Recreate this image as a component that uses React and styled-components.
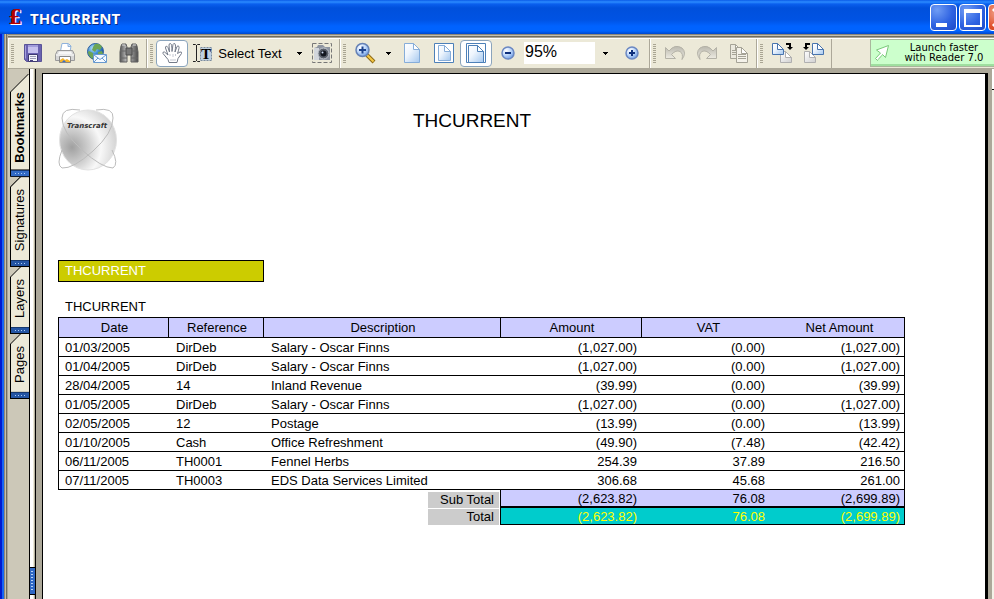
import React from 'react';
import styled, { createGlobalStyle, css } from 'styled-components';

const c = {
  face: '#ece9d8',
  shade: '#aca899',
  pane: '#ccc8b8',
  lilac: '#ccccff',
};

const GlobalStyle = createGlobalStyle`
  * { box-sizing: border-box; }
  html, body { margin: 0; height: 100%; overflow: hidden; }
  body, button, input { font-family: 'Liberation Sans', Arial, sans-serif; font-size: 13px; color: #000; }
  button { border: 0; padding: 0; background: none; cursor: pointer; }
  svg { display: block; flex: none; }
`;

const Window = styled.div`
  display: flex;
  flex-direction: column;
  height: 100vh;
  overflow: hidden;
  background: ${c.face};
`;

const TitleBar = styled.header`
  display: flex;
  align-items: center;
  flex: none;
  height: 34px;
  padding: 0 0 0 8px;
  overflow: hidden;
  background: linear-gradient(#0a5be8 0, #2b8bff 2px, #0a5fee 4px, #0050dc 8px, #0053e4 20px, #0062ff 26px, #0064ff 31px, #0047cc 34px);
`;

const AppMark = styled.span`
  width: 16px;
  color: #b30000;
  font: bold 20px/28px 'DejaVu Serif', serif;
  text-shadow: 1px 1px 0 #fff;
`;

const WindowTitle = styled.h1`
  margin: 0 0 0 6px;
  padding-top: 2px;
  color: #fff;
  font: bold 15px/18px 'Open Sans', 'Noto Sans', sans-serif;
  text-shadow: 1px 1px 0 #0a2a86;
`;

const Controls = styled.div`
  display: flex;
  gap: 2px;
  margin: 1px -21px 0 auto;
`;

const ControlButton = styled.button`
  width: 27px;
  height: 27px;
  flex: none;
  border: 1px solid #fff;
  border-radius: 4px;
  background: ${(p) =>
    p.$close
      ? 'radial-gradient(circle at 30% 30%, #f0a088, #e0502c 60%, #c03a18)'
      : 'radial-gradient(circle at 25% 20%, #6f9cf4, #2f63e2 55%, #1c49c8)'};
`;

const Frame = styled.div`
  display: flex;
  flex: 1;
  min-height: 0;
  border-left: 2px solid #0019cf;
  background: linear-gradient(90deg, #1664f4 0 2px, #8e8878 2px 3px, #c4bfae 3px 4px, #716d60 4px 5px, #aaa494 5px 6px, ${c.face} 6px);
  padding-left: 6px;
`;

const Client = styled.div`
  display: flex;
  flex-direction: column;
  flex: 1;
  min-width: 0;
  padding-top: 4px;
  background: linear-gradient(#8e8878 0 1px, #c4bfae 1px 2px, #716d60 2px 3px, #aaa494 3px 4px, ${c.face} 4px);
`;

const Toolbars = styled.div`
  display: flex;
  flex: none;
  height: 31px;
  overflow: hidden;
  border-top: 1px solid #fff;
  border-bottom: 1px solid ${c.shade};
`;

const Group = styled.div`
  display: flex;
  align-items: center;
  flex: none;
  padding: 0 1px 1px 2px;
  border-left: 1px solid #fff;
  border-right: 1px solid ${c.shade};
`;

const Grip = styled.span`
  width: 3px;
  height: 19px;
  margin-right: 3px;
  background: repeating-linear-gradient(#a9a593 0 1px, transparent 1px 2px);
`;

const Tool = styled.button`
  display: flex;
  align-items: center;
  justify-content: center;
  gap: 5px;
  width: ${(p) => p.$w || 32}px;
  height: 27px;
  ${(p) =>
    p.$active &&
    css`
      border: 1px solid #8aa4bc;
      border-radius: 4px;
      background: #fff;
    `}
`;

const ZoomInput = styled.input`
  width: 71px;
  height: 22px;
  padding: 0 0 2px 1px;
  border: 0;
  background: #fff;
  font-size: 16px;
  line-height: 20px;
`;

const Launch = styled.button`
  display: flex;
  align-items: center;
  flex: 1;
  height: 28px;
  margin-left: 38px;
  padding-left: 3px;
  border: solid #a9b79c;
  border-width: 1px 0 1px 1px;
  box-shadow: inset 0 -2px 0 #9fdf9f;
  background: #ccffcc;
`;

const LaunchText = styled.span`
  flex: 1;
  padding-left: 4px;
  white-space: nowrap;
  text-align: center;
  font: 10px/10px 'DejaVu Sans', Verdana, sans-serif;
`;

const Workspace = styled.div`
  display: flex;
  flex: 1;
  min-height: 0;
`;

const TabRail = styled.nav`
  width: 22px;
  padding: 5px 0 0 2px;
  background: ${c.pane};
  border-right: 1px solid #000;
`;

const TabButton = styled.button`
  --cut: ${(p) => (p.$first ? 18 : 10)}px;
  display: flex;
  flex-direction: column;
  width: 19px;
  padding-left: 1px;
  background: #000;
  clip-path: polygon(0 var(--cut), var(--cut) 0, 100% 0, 100% 100%, 0 100%);
`;

const TabFace = styled.span`
  display: block;
  width: 100%;
  padding: ${(p) => (p.$first ? '7px 0 18px' : '9px 0 12px')};
  line-height: 18px;
  text-align: left;
  writing-mode: vertical-rl;
  transform: rotate(180deg);
  background: ${c.face};
  font-weight: ${(p) => (p.$first ? 'bold' : 'normal')};
  clip-path: polygon(0 0, 100% 0, 100% calc(100% - var(--cut)), calc(100% - var(--cut)) 100%, 0 100%);
`;

const TabFoot = styled.span`
  display: block;
  width: 100%;
  height: 7px;
  border-bottom: 1px solid #000;
  background:
    repeating-linear-gradient(90deg, transparent 0 2px, #a9cbf5 2px 3px) 2px 2px / 13px 1px no-repeat,
    ${(p) => (p.$first ? '#316ac5' : '#2455a4')};
  border-top: 1px solid #16386f;
`;

const Splitter = styled.div`
  display: flex;
  flex-direction: column;
  justify-content: flex-end;
  width: 6px;
  padding-bottom: 4px;
  background: linear-gradient(90deg, #fff 0 3px, ${c.face} 3px 4px, #b5b19f 4px 5px, #000 5px);
`;

const SplitHandle = styled.button`
  width: 5px;
  height: 28px;
  border: solid #000;
  border-width: 1px 0;
  background:
    repeating-linear-gradient(transparent 0 2px, #b7d3f7 2px 3px) 1px 1px / 2px 22px no-repeat,
    #2f68c4;
`;

const Desk = styled.main`
  display: flex;
  flex: 1;
  min-width: 0;
  padding: 4px 4px 0 6px;
  background: ${c.shade};
`;

const Sheet = styled.article`
  flex: 1;
  min-width: 0;
  padding: 34px 80px 0 15px;
  border: solid #000;
  border-width: 1px 3px 0 1px;
  background: #fff;
`;

const ReportHead = styled.div`
  display: flex;
  align-items: flex-start;
`;

const ReportTitle = styled.h2`
  flex: 1;
  margin: 2px 79px 0 0;
  text-align: center;
  font-size: 19px;
  line-height: 22px;
  font-weight: normal;
`;

const AccountBand = styled.h3`
  width: 206px;
  margin: 89px 0 0;
  padding: 0 6px;
  border: 1px solid #000;
  background: #cccc00;
  color: #fff;
  font-size: 13px;
  line-height: 20px;
  font-weight: normal;
`;

const Ledger = styled.table`
  width: 100%;
  margin-top: 13px;
  table-layout: fixed;
  border-collapse: separate;
  border-spacing: 0;
  line-height: 18px;
`;

const Caption = styled.caption`
  padding: 3px 7px 1px;
  text-align: left;
`;

const Col = styled.col`
  width: ${(p) => (p.$w ? `${p.$w}px` : 'auto')};
`;

const HeadCell = styled.th`
  height: 21px;
  padding: 0 0 0 2px;
  border: solid #000;
  border-width: 1px 0 1px ${(p) => (p.$open ? 0 : 1)}px;
  background: ${c.lilac};
  font-weight: normal;
  line-height: 19px;
  &:last-child { border-right-width: 1px; }
`;

const Cell = styled.td`
  height: 19px;
  padding: 2px ${(p) => p.$pad || 4}px 0 8px;
  border-bottom: 1px solid #000;
  text-align: ${(p) => (p.$num ? 'right' : 'left')};
  line-height: 16px;
  white-space: nowrap;
  &:first-child { border-left: 1px solid #000; padding-left: 6px; }
  &:last-child { border-right: 1px solid #000; }
`;

const SumLabel = styled.th`
  padding: 1px 1px 0 0;
  font-weight: normal;
`;

const LabelBox = styled.span`
  display: block;
  width: 71px;
  margin-left: auto;
  padding-right: 5px;
  background: #ccc;
  text-align: right;
  line-height: 16px;
`;

const SumCell = styled.td`
  height: ${(p) => (p.$grand ? 17 : 18)}px;
  padding: 1px ${(p) => p.$pad || 4}px 0 0;
  border-bottom: ${(p) => (p.$grand ? 1 : 2)}px solid #000;
  background: ${(p) => (p.$grand ? '#00cccc' : c.lilac)};
  color: ${(p) => (p.$grand ? '#ffff00' : '#000')};
  text-align: right;
  line-height: 15px;
  &:nth-child(2) { border-left: 1px solid #000; }
  &:last-child { border-right: 1px solid #000; }
`;

const ScrollEdge = styled.div`
  width: 2px;
  background: linear-gradient(#fff 0 20px, #000 20px 21px, #f4f2e8 21px);
`;

const HiddenDefs = styled.svg`
  position: absolute;
`;

const Svg = ({ w = 22, h = 22, children }) => (
  <svg width={w} height={h} viewBox={`0 0 ${w} ${h}`} aria-hidden="true">{children}</svg>
);

const Defs = () => (
  <HiddenDefs width="0" height="0" aria-hidden="true">
    <defs>
      <linearGradient id="paper" x1="0" y1="0" x2="1" y2="1">
        <stop offset="0" stopColor="#fff" /><stop offset=".4" stopColor="#eef5fd" /><stop offset="1" stopColor="#a5c8ef" />
      </linearGradient>
      <linearGradient id="greyPaper" x1="0" y1="0" x2="1" y2="1">
        <stop offset="0" stopColor="#fff" /><stop offset="1" stopColor="#d0d0d0" />
      </linearGradient>
      <radialGradient id="lens" cx=".35" cy=".3" r=".8">
        <stop offset="0" stopColor="#fff" /><stop offset=".5" stopColor="#bcd6fa" /><stop offset="1" stopColor="#5f92e0" />
      </radialGradient>
      <radialGradient id="globe" cx=".35" cy=".3" r=".75">
        <stop offset="0" stopColor="#b9e4fb" /><stop offset=".5" stopColor="#3f8ed4" /><stop offset="1" stopColor="#164a96" />
      </radialGradient>
      <linearGradient id="tube"><stop offset="0" stopColor="#555" /><stop offset=".4" stopColor="#c8c8c8" /><stop offset="1" stopColor="#4c4c4c" /></linearGradient>
      <linearGradient id="arrowGrey" x1="0" y1="0" x2="0" y2="1"><stop offset="0" stopColor="#b9b7ad" /><stop offset="1" stopColor="#f1efe6" /></linearGradient>
      <radialGradient id="orb" cx=".22" cy=".62" r=".82">
        <stop offset="0" stopColor="#a0a0a0" /><stop offset=".38" stopColor="#d2d2d2" /><stop offset=".62" stopColor="#f8f8f8" /><stop offset="1" stopColor="#cfcfcf" />
      </radialGradient>
    </defs>
  </HiddenDefs>
);

const SaveIcon = () => (
  <Svg>
    <path d="M2.500 2.500h17v17h-15l-2-2z" fill="#6a62b0" stroke="#5a5498" />
    <path d="M3.500 3.500v13" stroke="#a6a0de" />
    <path d="M6 3h10v8H6z" fill="#c6c1ee" /><path d="M6 3h10v2H6z" fill="#a29ddb" />
    <path d="M6.500 12.500h9v7h-9z" fill="#f4f4fb" stroke="#3d3970" />
    <path d="M8 14.500h6M8 16.500h6" stroke="#9a9ab4" /><path d="M8 18h3v2H8z" fill="#45407e" />
  </Svg>
);
const PrintIcon = () => (
  <Svg>
    <path d="M6.500 9L8 1.500h6.500l2.500 2.500-1 6z" fill="#fff" stroke="#8fb2dc" /><path d="M14 2v2.500h3" fill="#cfe2f7" stroke="#8fb2dc" />
    <path d="M3.500 8.500h15l2 4v6h-19v-6z" fill="#d6d6d6" stroke="#9a9a9a" />
    <path d="M5 9.500h12l1 2.500H4z" fill="#f7f7f7" /><path d="M2 13h18" stroke="#fff" />
    <path d="M5.500 14.500h11v6h-11z" fill="#fff" stroke="#888" />
    <path d="M6 20v-2l3-2 2 2 2-1 3 2v1z" fill="#f5b52e" /><path d="M8 20l2-2 2 2z" fill="#356fd0" />
  </Svg>
);
const MailIcon = () => (
  <Svg>
    <circle cx="9.500" cy="9.500" r="8" fill="url(#globe)" stroke="#2d5d9d" />
    <path d="M9 2q5-1 7 3l-2 3-3-1-2 3-3-2 1-3zM3 9l4 2 1 3-2 3Q2 13 2 10zM12 10l4-1 1 3h-5z" fill="#6da554" />
    <path d="M7.500 12.500h13v8h-13z" fill="#f4f9ff" stroke="#6899cf" /><path d="M8 13l6 4.500 6-4.500M8 20l4-4M20 20l-4-4" fill="none" stroke="#6899cf" />
  </Svg>
);
const BinocularsIcon = () => (
  <Svg>
    <path d="M4 2h4l1 3v15H2V10l1-6zM14 2h4l1 2 1 6v10h-7V5z" fill="url(#tube)" stroke="#5f5f5f" />
    <path d="M8 6h6v7H8z" fill="#777" stroke="#4c4c4c" /><path d="M3 9h6M13 9h6M2 16h7M13 16h7" stroke="#666" /><path d="M4 3h3M15 3h3" stroke="#ddd" />
  </Svg>
);
const HandIcon = () => (
  <Svg>
    <path d="M8 20.500l-1-3-5-6q-.5-2 1.500-1.500L7 13 4.500 6q-.2-2 1.300-1.800Q7 4.300 8.500 10L8 3q.2-1.700 1.500-1.500Q11 1.800 11 9.500l1-7Q12.500 1 14 1.800q1 .7 0 8.200l2-5.500q1-1.300 2 0 .5 1-1.500 7L19 10q2-.5 1.500 1.500L17 16.500l-1 4z" fill="#fff" stroke="#747b89" />
    <path d="M9 12v2M12 12v3M14.500 12v2M9 18h6" stroke="#c3c7d1" fill="none" />
  </Svg>
);
const SelectIcon = () => (
  <Svg w={21} h={20}>
    <path d="M1 1.500h2.500l1 1 1-1H8M1 18.500h2.500l1-1 1 1H8M4.500 2v16" fill="none" stroke="#222" />
    <path d="M8.500 4.500h11v13h-11z" fill="#bed0e2" stroke="#7b8b9d" strokeDasharray="2 1" />
    <text x="14" y="16" textAnchor="middle" fontFamily="Liberation Serif, serif" fontWeight="bold" fontSize="15">T</text>
  </Svg>
);
const CameraIcon = () => (
  <Svg>
    <path d="M1.500 1.500h19v19h-19z" fill="none" stroke="#777" strokeDasharray="4 2" />
    <path d="M3 6l3-1 1-2h5l2 2h5v13H3z" fill="#8d949f" /><path d="M3 6h5v12H3z" fill="#d2d6dc" />
    <circle cx="12.500" cy="11.500" r="5.500" fill="#5a606b" stroke="#c6cbd4" /><circle cx="12.500" cy="11.500" r="3" fill="#12161f" /><circle cx="11.500" cy="10.500" r="1" fill="#cfdcf4" />
  </Svg>
);
const MagnifierIcon = () => (
  <Svg>
    <path d="M13 13l7 7" stroke="#8e6a15" strokeWidth="4" /><path d="M13 13l6.500 6.500" stroke="#f6c945" strokeWidth="2" />
    <circle cx="8.500" cy="8" r="6.500" fill="url(#lens)" stroke="#6682b5" strokeWidth="1.500" /><path d="M8.500 4.500v7M5 8h7" stroke="#1d438e" strokeWidth="2" />
  </Svg>
);
const PageShape = ({ x = 3, y = 1, w = 16, h = 20, fill = 'url(#paper)', stroke = '#86add9' }) => (
  <g fill={fill} stroke={stroke}>
    <path d={`M${x + 0.5} ${y + 0.5}h${w - 7}l6 6v${h - 7}h-${w - 1}z`} /><path d={`M${x + w - 6.5} ${y + 0.5}v6h6z`} fill="#fff" />
  </g>
);
const FitPageIcon = ({ wide }) => (
  <Svg>
    <path d="M1.500 1.500h19v19h-19z" fill="#fff" stroke="#4d80b8" />
    {wide ? <PageShape x={3} y={3} w={16} h={18} stroke="#4d80b8" /> : <PageShape x={5} y={3} w={13} h={16} />}
  </Svg>
);
const RoundSign = ({ plus }) => (
  <Svg w={16} h={16}>
    <circle cx="8" cy="8" r="6" fill="url(#lens)" stroke="#6b88c2" strokeWidth="1.500" /><path d={plus ? 'M5 8h6M8 5v6' : 'M5 8h6'} stroke="#0d2f7c" strokeWidth="2" />
  </Svg>
);
const Caret = () => <Svg w={5} h={3}><path d="M0 0h5v1H4v1H3v1H2V2H1V1H0z" /></Svg>;
const TurnIcon = ({ redo }) => (
  <Svg>
    <path transform={redo ? 'matrix(-1 0 0 1 22 0)' : undefined} d="M1.500 5.500v11h10L7.500 12.500Q12 7.500 16 9.500q3.500 2 2 8 5-7 0-11.500Q11 1.500 5 9z" fill="url(#arrowGrey)" stroke="#b4b2a7" />
  </Svg>
);
const CopyIcon = () => (
  <Svg>
    <PageShape x={2} y={2} w={12} h={15} fill="#ebe9df" stroke="#a5a397" /><path d="M4 8.500h6M4 10.500h6M4 12.500h6" stroke="#a5a397" />
    <PageShape x={8} y={5} w={12} h={16} fill="#f4f2ea" stroke="#a5a397" /><path d="M10 12.500h8M10 14.500h8M10 16.500h8" stroke="#a5a397" />
  </Svg>
);
const JumpIcon = ({ back }) => (
  <Svg>
    <PageShape x={back ? 1 : 9} y={9} w={12} h={12} fill="url(#greyPaper)" stroke="#b0b0b0" />
    <PageShape x={back ? 9 : 1} y={1} w={12} h={12} stroke="#4874ae" />
    <g transform={back ? 'matrix(-1 0 0 1 22 0)' : undefined}><path d="M15 2h4v4" fill="none" stroke="#000" strokeWidth="2" /><path d="M16 5h6l-3 3z" /></g>
  </Svg>
);
const PointerIcon = () => (
  <Svg w={16} h={18}><path d="M14.500 1.500l-3 12-3-3-5 6-2-2 5-5.500-4-3z" fill="#fff" stroke="#79c879" /><path d="M8 11l-4 5" stroke="#aee0ae" /></Svg>
);
const Logo = () => (
  <Svg w={60} h={63}>
    <ellipse cx="30" cy="32" rx="28.500" ry="30" fill="url(#orb)" stroke="#e2e2e2" />
    <g fill="none" stroke="#bcbcbc">
      <path d="M22 2Q4-1 4 10q0 14 20 32t31 18q6-4-1-18" /><path d="M38 2q18-3 17 8 0 15-20 33T4 60q-6-3 0-18" />
    </g>
    <text x="9" y="20" fontFamily="DejaVu Sans, sans-serif" fontSize="7" fontWeight="bold" fontStyle="italic" fill="#333">Transcraft</text>
  </Svg>
);

const heads = ['Date', 'Reference', 'Description', 'Amount', 'VAT', 'Net Amount'];
const salary = (date) => [date, 'DirDeb', 'Salary - Oscar Finns', '(1,027.00)', '(0.00)', '(1,027.00)'];
const rows = [
  salary('01/03/2005'),
  salary('01/04/2005'),
  ['28/04/2005', '14', 'Inland Revenue', '(39.99)', '(0.00)', '(39.99)'],
  salary('01/05/2005'),
  ['02/05/2005', '12', 'Postage', '(13.99)', '(0.00)', '(13.99)'],
  ['01/10/2005', 'Cash', 'Office Refreshment', '(49.90)', '(7.48)', '(42.42)'],
  ['06/11/2005', 'TH0001', 'Fennel Herbs', '254.39', '37.89', '216.50'],
  ['07/11/2005', 'TH0003', 'EDS Data Services Limited', '306.68', '45.68', '261.00'],
];
const sums = ['(2,623.82)', '76.08', '(2,699.89)'];
const tabs = ['Bookmarks', 'Signatures', 'Layers', 'Pages'];

const ToolGroup = ({ children }) => <Group><Grip />{children}</Group>;

const SumRow = ({ label, grand }) => (
  <tr>
    <SumLabel colSpan={3} scope="row"><LabelBox>{label}</LabelBox></SumLabel>
    {sums.map((v, i) => <SumCell key={v} $grand={grand} $pad={i === 1 ? 8 : 4}>{v}</SumCell>)}
  </tr>
);

export default function App() {
  return (
    <Window>
      <GlobalStyle />
      <Defs />
      <TitleBar>
        <AppMark aria-hidden="true">£</AppMark>
        <WindowTitle>THCURRENT</WindowTitle>
        <Controls>
          <ControlButton aria-label="Minimize"><Svg w={25} h={25}><path d="M5 18h11v4H5z" fill="#fff" /></Svg></ControlButton>
          <ControlButton aria-label="Maximize"><Svg w={25} h={25}><path d="M4 4h18v18H4zM6 8v12h14V8z" fill="#fff" fillRule="evenodd" /></Svg></ControlButton>
          <ControlButton $close aria-label="Close"><Svg w={25} h={25}><path d="M4 4l17 17M21 4L4 21" stroke="#fff" strokeWidth="3" /></Svg></ControlButton>
        </Controls>
      </TitleBar>
      <Frame>
        <Client>
          <Toolbars>
            <ToolGroup>
              <Tool aria-label="Save"><SaveIcon /></Tool>
              <Tool aria-label="Print"><PrintIcon /></Tool>
              <Tool aria-label="Email"><MailIcon /></Tool>
              <Tool aria-label="Search"><BinocularsIcon /></Tool>
            </ToolGroup>
            <ToolGroup>
              <Tool $active aria-label="Hand tool"><HandIcon /></Tool>
              <Tool $w={118}><SelectIcon />Select Text<Svg w={5} h={3} /><Caret /></Tool>
              <Tool aria-label="Snapshot"><CameraIcon /></Tool>
            </ToolGroup>
            <ToolGroup>
              <Tool aria-label="Zoom in tool"><MagnifierIcon /></Tool>
              <Tool $w={15} aria-label="Zoom tools"><Caret /></Tool>
              <Tool aria-label="Actual size"><Svg><PageShape /></Svg></Tool>
              <Tool aria-label="Fit page"><FitPageIcon /></Tool>
              <Tool $active aria-label="Fit width"><FitPageIcon wide /></Tool>
              <Tool aria-label="Zoom out"><RoundSign /></Tool>
              <ZoomInput aria-label="Zoom level" defaultValue="95%" />
              <Tool $w={21} aria-label="Zoom levels"><Caret /></Tool>
              <Tool aria-label="Zoom in"><RoundSign plus /></Tool>
            </ToolGroup>
            <ToolGroup>
              <Tool aria-label="Undo"><TurnIcon /></Tool>
              <Tool aria-label="Redo"><TurnIcon redo /></Tool>
              <Tool aria-label="Copy"><CopyIcon /></Tool>
            </ToolGroup>
            <ToolGroup>
              <Tool aria-label="Next view"><JumpIcon /></Tool>
              <Tool aria-label="Previous view"><JumpIcon back /></Tool>
            </ToolGroup>
            <Launch><PointerIcon /><LaunchText>Launch faster<br />with Reader 7.0</LaunchText></Launch>
          </Toolbars>
          <Workspace>
            <TabRail>
              {tabs.map((t, i) => (
                <TabButton key={t} $first={i === 0}>
                  <TabFace $first={i === 0}>{t}</TabFace>
                  <TabFoot $first={i === 0} />
                </TabButton>
              ))}
            </TabRail>
            <Splitter><SplitHandle aria-label="Toggle panel" /></Splitter>
            <Desk>
              <Sheet>
                <ReportHead><Logo /><ReportTitle>THCURRENT</ReportTitle></ReportHead>
                <AccountBand>THCURRENT</AccountBand>
                <Ledger>
                  <Caption>THCURRENT</Caption>
                  <colgroup><Col $w={110} /><Col $w={95} /><Col /><Col $w={141} /><Col $w={132} /><Col $w={132} /></colgroup>
                  <thead>
                    <tr>{heads.map((h, i) => <HeadCell key={h} scope="col" $open={i === 5}>{h}</HeadCell>)}</tr>
                  </thead>
                  <tbody>
                    {rows.map((r) => (
                      <tr key={r[0]}>{r.map((v, i) => <Cell key={i} $num={i > 2} $pad={i === 4 ? 8 : 4}>{v}</Cell>)}</tr>
                    ))}
                  </tbody>
                  <tfoot>
                    <SumRow label="Sub Total" />
                    <SumRow label="Total" grand />
                  </tfoot>
                </Ledger>
              </Sheet>
            </Desk>
            <ScrollEdge />
          </Workspace>
        </Client>
      </Frame>
    </Window>
  );
}
